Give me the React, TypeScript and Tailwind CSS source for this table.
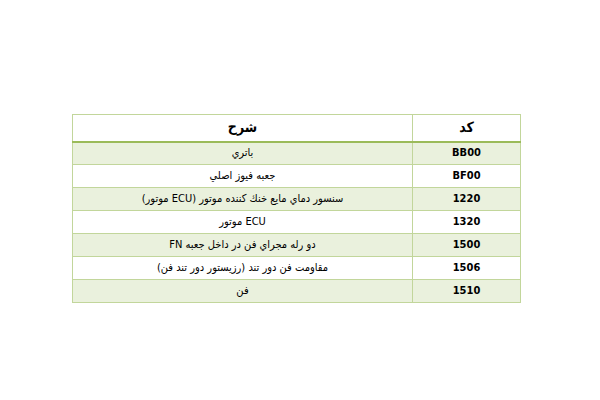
import React from "react";

const rows: [string, string][] = [
  ["BB00", "باتري"],
  ["BF00", "جعبه فيوز اصلي"],
  ["1220", "سنسور دماي مايع خنك كننده موتور (ECU موتور)"],
  ["1320", "ECU موتور"],
  ["1500", "دو رله مجراي فن در داخل جعبه FN"],
  ["1506", "مقاومت فن دور تند (رزيستور دور تند فن)"],
  ["1510", "فن"],
];

export default function App() {
  return (
    <div className="w-[600px] h-[400px] bg-white pt-[114px] pl-[72px]" style={{ fontFamily: '"DejaVu Sans Condensed", "DejaVu Sans", sans-serif' }}>
      <table dir="rtl" className="w-[449px] border-collapse border border-[#c2d69b] text-black">
        <thead>
          <tr className="h-[27px] border-b-2 border-[#9bbb59]">
            <th className="w-[108px] border border-[#c2d69b] border-b-2 border-b-[#9bbb59] text-[14px] font-bold p-0">کد</th>
            <th className="border border-[#c2d69b] border-b-2 border-b-[#9bbb59] text-[14px] font-bold p-0">شرح</th>
          </tr>
        </thead>
        <tbody>
          {rows.map(([code, desc], i) => (
            <tr key={code} className={i % 2 === 0 ? "h-[23px] bg-[#eaf1dd]" : "h-[23px] bg-white"}>
              <td dir="ltr" className="border border-[#c2d69b] text-center text-[11px] font-bold p-0">{code}</td>
              <td className="border border-[#c2d69b] text-center text-[11px] p-0">{desc}</td>
            </tr>
          ))}
        </tbody>
      </table>
    </div>
  );
}
